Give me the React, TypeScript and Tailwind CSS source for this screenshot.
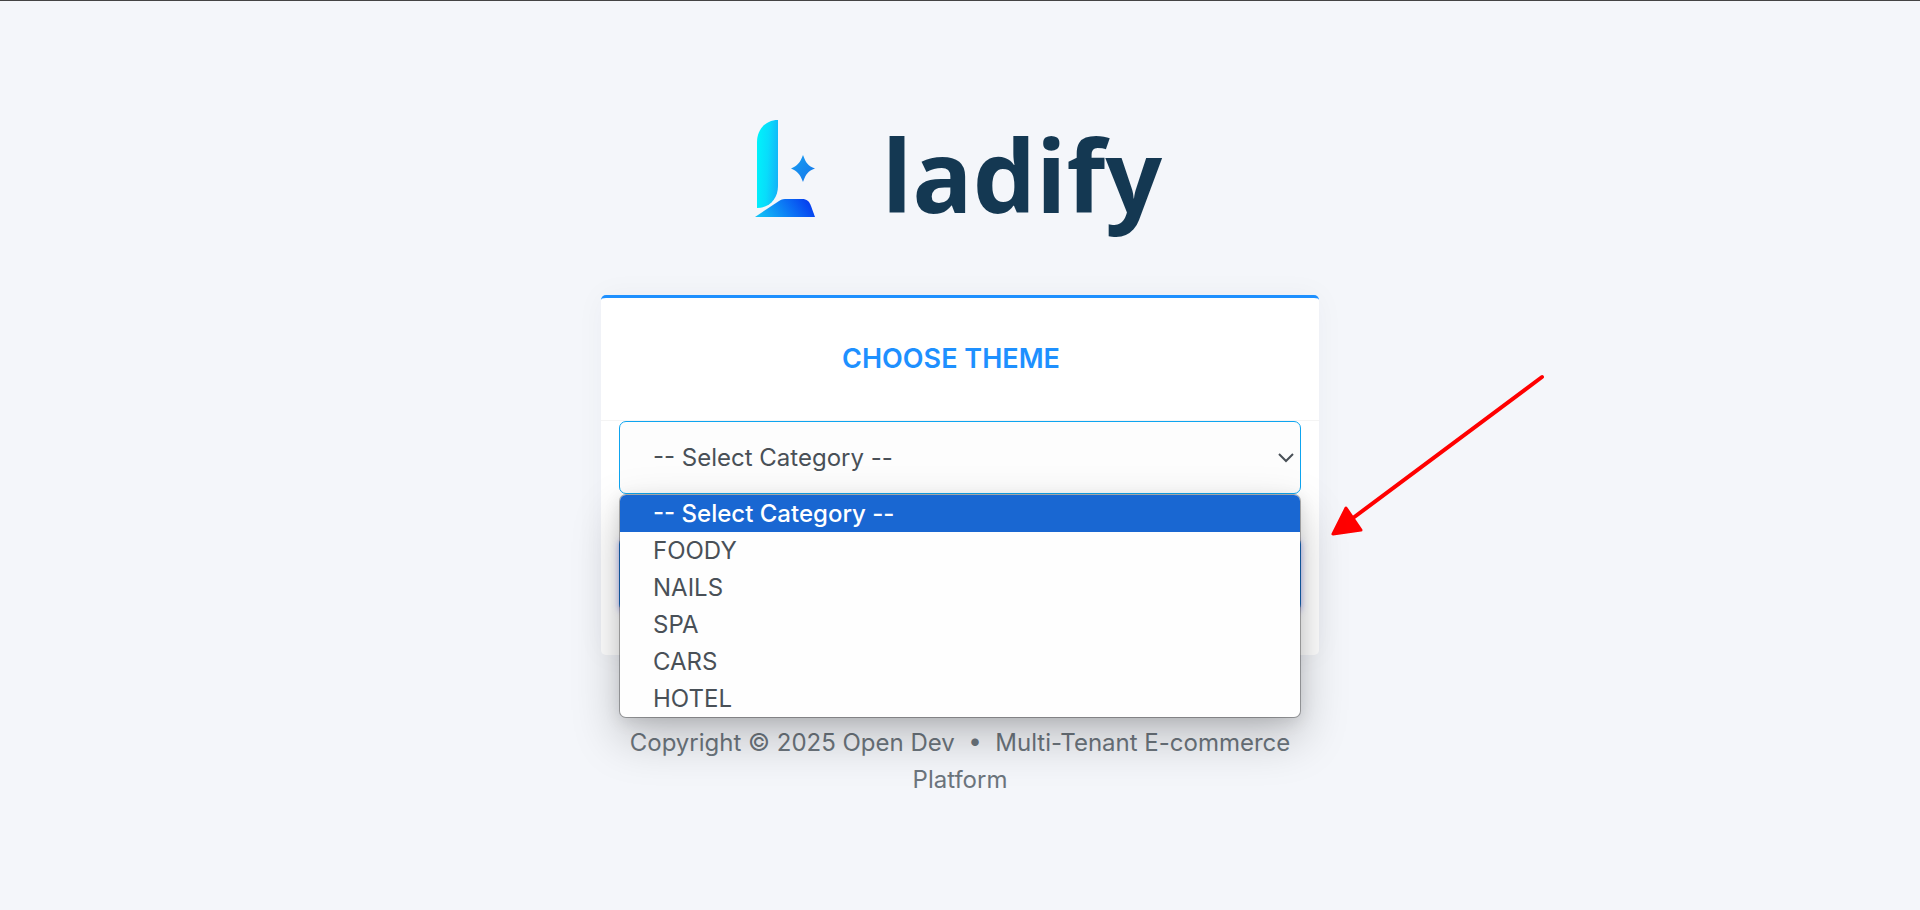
import { useState } from 'react';

const categories = ['-- Select Category --', 'FOODY', 'NAILS', 'SPA', 'CARS', 'HOTEL'];

function LogoMark() {
  return (
    <svg width="62" height="98" viewBox="0 0 62 98" aria-hidden="true">
      <defs>
        <linearGradient id="stem" x1="0" y1="0.4" x2="1" y2="0.6">
          <stop offset="0" stopColor="#00f2fb" />
          <stop offset="0.5" stopColor="#08dcfb" />
          <stop offset="1" stopColor="#12b4f8" />
        </linearGradient>
        <linearGradient id="foot" x1="0" y1="0.6" x2="1" y2="0.4">
          <stop offset="0" stopColor="#12c0f6" />
          <stop offset="0.55" stopColor="#0b74f5" />
          <stop offset="1" stopColor="#0538ee" />
        </linearGradient>
        <linearGradient id="spark" x1="0" y1="0" x2="1" y2="1">
          <stop offset="0" stopColor="#17a0f2" />
          <stop offset="1" stopColor="#1674ea" />
        </linearGradient>
      </defs>
      <path d="M24 0v66c0 12-8 22-21 22V22C3 9 12 0 24 0Z" fill="url(#stem)" />
      <path d="M1 97 25 81c3-2 5-2 8-2h15c5 0 7 2 9 7l4 11Z" fill="url(#foot)" />
      <path d="M49 35c3 8 5 11 12 13.500C54 51 52 54 49 62c-3-8-6-11-12-13.500C43 46 46 43 49 35Z" fill="url(#spark)" />
    </svg>
  );
}

function Arrow() {
  return (
    <svg
      width="214"
      height="162"
      viewBox="0 0 214 162"
      className="pointer-events-none absolute left-full top-[76px] ml-3 max-w-none"
      aria-hidden="true"
    >
      <path d="M211 3 22 144" stroke="#ff0000" strokeWidth="4" strokeLinecap="round" />
      <path d="M15 134 2 160l28-4Z" fill="#ff0000" stroke="#ff0000" strokeWidth="3" strokeLinejoin="round" />
    </svg>
  );
}

export default function App() {
  const [category, setCategory] = useState(categories[0]);

  return (
    <div className="min-h-screen border-t border-[#444444] bg-[#f4f6fa] px-4 pt-[119px] font-[Inter,sans-serif] text-[24px] leading-[37px] text-[#495057]">
      <main className="mx-auto w-full max-w-[718px]">
        <div className="flex h-[175px] items-start justify-center gap-[66px] pr-1">
          <LogoMark />
          <span className="font-['Open_Sans',sans-serif] text-[100px] font-bold leading-[108px] text-[#143852]">ladify</span>
        </div>

        <section className="relative rounded-[5px] border-t-3 border-[#1e90ff] bg-white shadow-[0_0_30px_rgba(30,40,80,0.04)]">
          <header className="border-b border-[#f4f4f4] py-10 pr-[18px] text-center">
            <h1 className="text-[27px] font-semibold leading-[42px] text-[#1e90ff]">CHOOSE THEME</h1>
          </header>

          <form className="px-[18px] pb-[44px]" onSubmit={(e) => e.preventDefault()}>
            <div className="relative">
              <select
                aria-label="Category"
                value={category}
                onChange={(e) => setCategory(e.target.value)}
                className="block h-[73px] w-full appearance-none rounded-[7px] border border-[#0ea5f0] bg-[#fdfdfd] px-[33px] outline-none"
              >
                {categories.map((c) => (
                  <option key={c}>{c}</option>
                ))}
              </select>
              <svg
                width="16"
                height="10"
                viewBox="0 0 16 10"
                className="pointer-events-none absolute right-[7px] top-8"
                fill="none"
                aria-hidden="true"
              >
                <path d="m1 1 7 7 7-7" stroke="#495057" strokeWidth="2" />
              </svg>

              <ul className="absolute inset-x-0 top-full z-10 overflow-hidden rounded-[7px] border border-black/30 bg-[#fefefe] bg-clip-padding shadow-[0_20px_48px_rgba(0,0,0,0.22),0_4px_16px_rgba(0,0,0,0.1)]">
                {categories.map((c) => (
                  <li key={c}>
                    <button
                      type="button"
                      onClick={() => setCategory(c)}
                      className={`block w-full px-[33px] text-left ${c === category ? 'bg-[#1967d2] font-medium text-white' : ''}`}
                    >
                      {c}
                    </button>
                  </li>
                ))}
              </ul>
            </div>

            <button
              type="submit"
              aria-label="Continue"
              className="mt-[43px] block h-[74px] w-full rounded-[7px] bg-[#1e90ff] shadow-[0_2px_6px_rgba(110,110,240,0.5)]"
            />
          </form>
          <Arrow />
        </section>

        <footer className="px-[18px] pt-[69px] text-center text-[#6c757d]">
          Copyright © 2025 Open Dev &nbsp;•&nbsp; Multi-Tenant E-commerce Platform
        </footer>
      </main>
    </div>
  );
}
